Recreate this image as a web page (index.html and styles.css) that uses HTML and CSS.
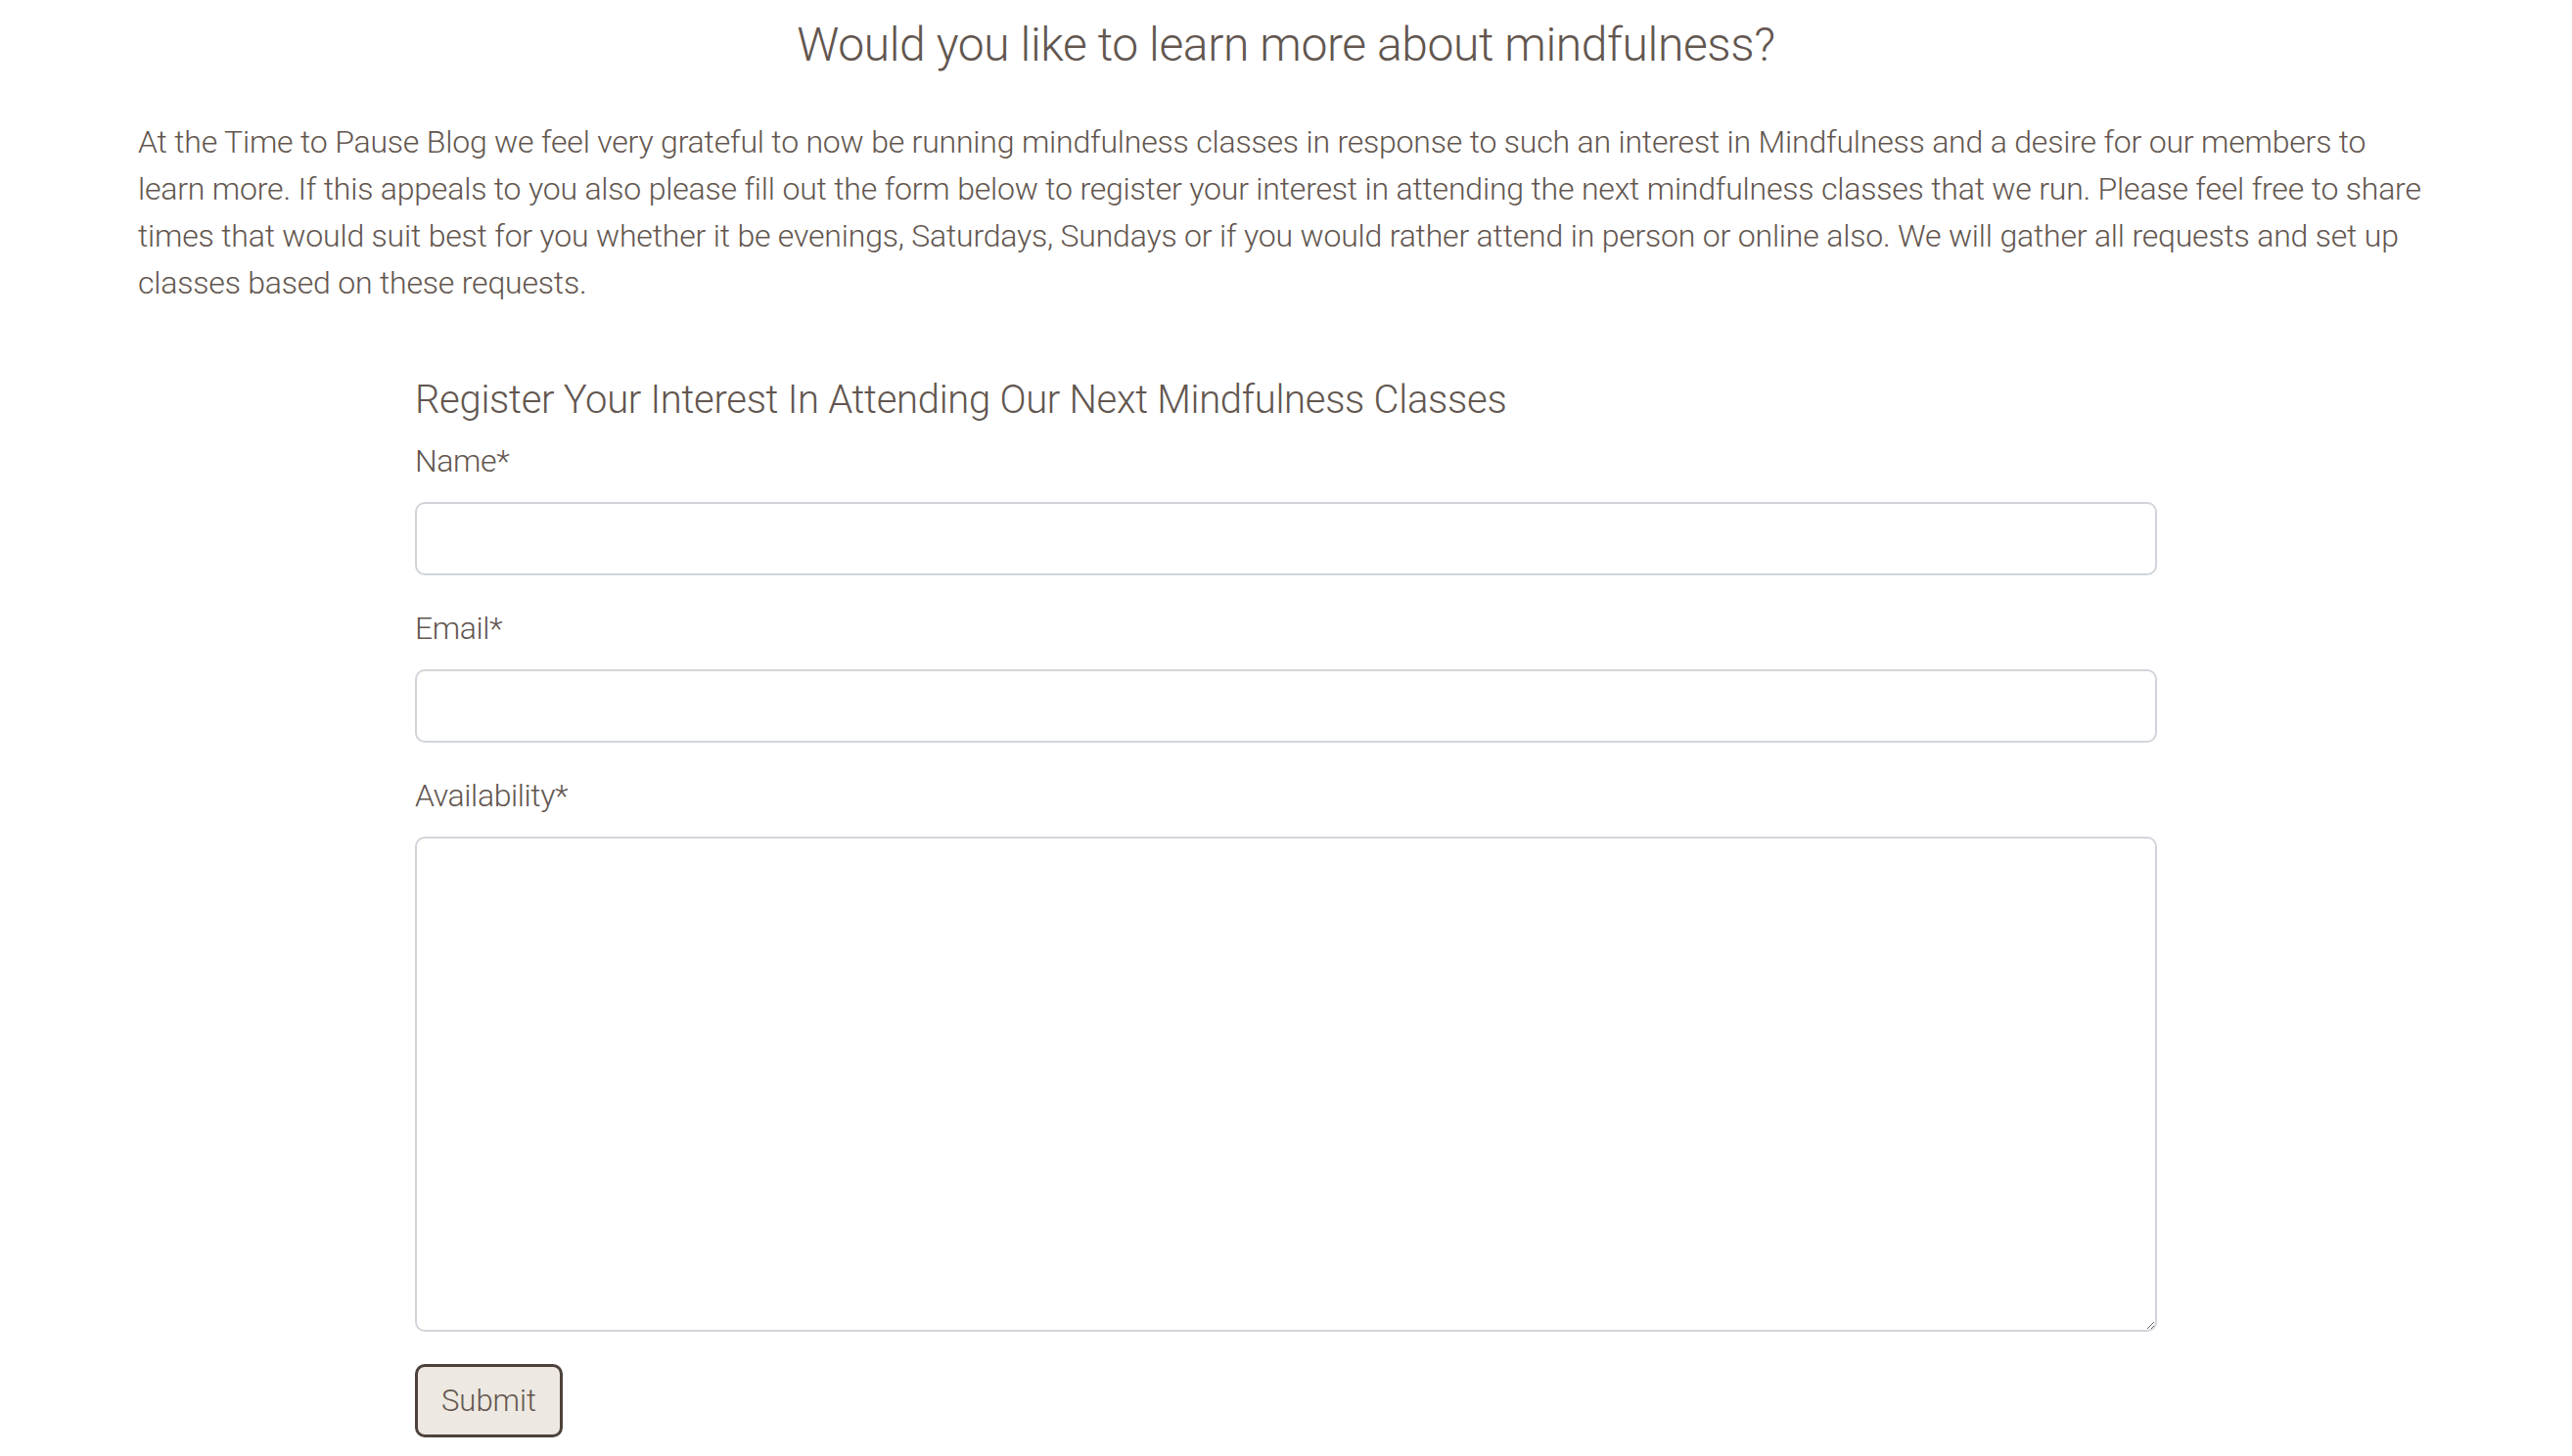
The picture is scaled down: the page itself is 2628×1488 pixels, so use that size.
FILE: index.html
```html
<!DOCTYPE html>
<html lang="en">
<head>
<meta charset="utf-8">
<title>Mindfulness Classes</title>
<link rel="stylesheet" href="styles.css">
</head>
<body>
<main class="page">
  <h1 class="title">Would you like to learn more about mindfulness?</h1>
  <p class="intro">At the Time to Pause Blog we feel very grateful to now be running mindfulness classes in response to such an interest in Mindfulness and a desire for our members to learn more. If this appeals to you also please fill out the form below to register your interest in attending the next mindfulness classes that we run. Please feel free to share times that would suit best for you whether it be evenings, Saturdays, Sundays or if you would rather attend in person or online also. We will gather all requests and set up classes based on these requests.</p>
  <form class="register">
    <h2 class="form-title">Register Your Interest In Attending Our Next Mindfulness Classes</h2>
    <label class="field-label" for="name">Name*</label>
    <input class="field" id="name" type="text">
    <label class="field-label" for="email">Email*</label>
    <input class="field" id="email" type="email">
    <label class="field-label" for="avail">Availability*</label>
    <textarea class="field area" id="avail"></textarea>
    <button class="submit" type="button">Submit</button>
  </form>
</main>
</body>
</html>
```
FILE: styles.css
```css
* { box-sizing: border-box; }
html, body { margin: 0; padding: 0; background: #ffffff; }
body {
  font-family: "Roboto Light", Roboto, "Liberation Sans", sans-serif;
  font-weight: 300;
  color: #62564f;
}
.page {
  padding: 16px 141px 0;
}
.title {
  margin: 0;
  font-size: 48px;
  font-weight: 300;
  letter-spacing: -0.4px;
  line-height: 60px;
  text-align: center;
}
.intro {
  margin: 45px 10px 0 0;
  font-size: 32px;
  letter-spacing: -0.2px;
  line-height: 48px;
}
.register {
  width: 1780px;
  margin: 73px auto 0;
  display: flex;
  flex-direction: column;
  align-items: flex-start;
}
.form-title {
  margin: 0 0 17px;
  font-size: 40px;
  font-weight: 300;
  letter-spacing: -0.3px;
  line-height: 46px;
}
.field-label {
  display: block;
  font-size: 32px;
  letter-spacing: -0.4px;
  line-height: 45px;
  margin-bottom: 19px;
}
.field {
  display: block;
  width: 100%;
  height: 75px;
  margin: 0 0 32px;
  border: 2px solid #d1d5da;
  border-radius: 10px;
  background: #fff;
  font-family: inherit;
  font-size: 30px;
  color: inherit;
  outline: none;
}
.area {
  height: 506px;
  margin-bottom: 33px;
  resize: vertical;
}
.submit {
  height: 75px;
  padding: 0 24px;
  border: 3px solid #4d423b;
  border-radius: 10px;
  background: #ede8e1;
  font-family: inherit;
  font-weight: 300;
  font-size: 31px;
  color: #62564f;
}
```
